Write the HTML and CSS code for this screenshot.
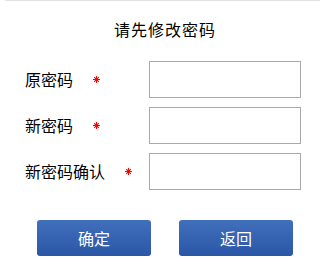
FILE: index.html
```html
<!DOCTYPE html>
<html lang="zh-CN">
<head>
<meta charset="utf-8">
<link rel="stylesheet" href="styles.css">
</head>
<body>
<div class="topline"></div>
<h1 class="title">请先修改密码</h1>
<form class="form">
  <div class="row">
    <label class="label">原密码<svg class="req" viewBox="0 0 7 7" width="7" height="7"><path d="M3.5 0V7M0 3.5H7M1.2 1.2L5.8 5.8M5.8 1.2L1.2 5.8" stroke="#f00" stroke-width="1.1"/></svg></label>
    <input class="input" type="password">
  </div>
  <div class="row">
    <label class="label">新密码<svg class="req" viewBox="0 0 7 7" width="7" height="7"><path d="M3.5 0V7M0 3.5H7M1.2 1.2L5.8 5.8M5.8 1.2L1.2 5.8" stroke="#f00" stroke-width="1.1"/></svg></label>
    <input class="input" type="password">
  </div>
  <div class="row">
    <label class="label">新密码确认<svg class="req" viewBox="0 0 7 7" width="7" height="7"><path d="M3.5 0V7M0 3.5H7M1.2 1.2L5.8 5.8M5.8 1.2L1.2 5.8" stroke="#f00" stroke-width="1.1"/></svg></label>
    <input class="input" type="password">
  </div>
  <div class="actions">
    <button type="button" class="btn">确定</button>
    <button type="button" class="btn">返回</button>
  </div>
</form>
</body>
</html>
```
FILE: styles.css
```css
html, body {
  margin: 0;
  padding: 0;
  background: #fff;
}
body {
  font-family: "Noto Sans CJK SC", "Liberation Sans", sans-serif;
  color: #000;
  width: 330px;
}
.topline {
  height: 0;
  border-top: 1px solid #e2e2e2;
  margin: 0 10px 0 5px;
}
.title {
  margin: 18px 0 0;
  font-size: 16px;
  line-height: 20px;
  font-weight: normal;
  text-align: center;
  letter-spacing: 1px;
}
.form {
  margin-top: 22px;
  display: flex;
  flex-direction: column;
  gap: 10px;
}
.row {
  display: flex;
  align-items: center;
  height: 36px;
  padding-left: 25px;
}
.label {
  width: 124px;
  font-size: 16px;
  line-height: 20px;
  display: flex;
  align-items: center;
}
.req {
  margin-left: 20px;
  margin-top: 1px;
}
.input {
  box-sizing: border-box;
  width: 152px;
  height: 37px;
  margin: 0;
  border: 1px solid #a9a9a9;
  background: #fff;
  padding: 0 4px;
}
.actions {
  display: flex;
  justify-content: center;
  gap: 28px;
  margin-top: 21px;
  padding-left: 0;
}
.btn {
  width: 114px;
  height: 36px;
  border: none;
  border-radius: 3px;
  background: linear-gradient(#4170bb, #2a56a7);
  color: #fff;
  font-family: "Noto Sans CJK SC", sans-serif;
  font-size: 16px;
  padding: 0;
}
```
